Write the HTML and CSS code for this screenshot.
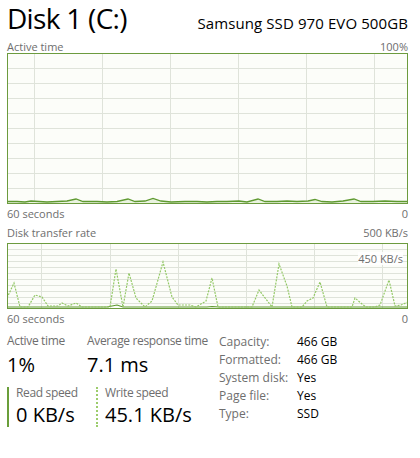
FILE: index.html
```html
<!DOCTYPE html>
<html>
<head>
<meta charset="utf-8">
<link rel="stylesheet" href="styles.css">
</head>
<body>
<div class="page">
  <header class="header">
    <div class="title">Disk 1 (C:)</div>
    <div class="model">Samsung SSD 970 EVO 500GB</div>
  </header>

  <div class="row-label top1"><span>Active time</span><span>100%</span></div>
  <div class="chart chart-active">
    <svg width="401" height="151" viewBox="0 0 401 151">
      <rect x="0" y="0" width="401" height="151" fill="#fcfdf9"/>
      <g stroke="#dfe3da" stroke-width="1">
        <line x1="0" y1="15.5" x2="401" y2="15.5"/>
        <line x1="0" y1="30.5" x2="401" y2="30.5"/>
        <line x1="0" y1="45.5" x2="401" y2="45.5"/>
        <line x1="0" y1="60.5" x2="401" y2="60.5"/>
        <line x1="0" y1="75.5" x2="401" y2="75.5"/>
        <line x1="0" y1="90.5" x2="401" y2="90.5"/>
        <line x1="0" y1="105.5" x2="401" y2="105.5"/>
        <line x1="0" y1="120.5" x2="401" y2="120.5"/>
        <line x1="0" y1="135.5" x2="401" y2="135.5"/>
        <line x1="27.5" y1="0" x2="27.5" y2="151"/>
        <line x1="95.5" y1="0" x2="95.5" y2="151"/>
        <line x1="163.5" y1="0" x2="163.5" y2="151"/>
        <line x1="231.5" y1="0" x2="231.5" y2="151"/>
        <line x1="299.5" y1="0" x2="299.5" y2="151"/>
        <line x1="367.5" y1="0" x2="367.5" y2="151"/>
      </g>
      <polygon fill="#eaf3e0" points="0,151 0,148.5 10,148.5 18,149 24,148 32,148.5 40,149 50,148.5 60,148 69,146 76,148.5 90,148.5 100,149 110,148.5 121,146 128,148.5 138,148 146,145.5 154,148 164,149 178,148.5 190,148.5 200,149 210,148.5 220,148.5 232,148 240,149 251,146 258,148.5 270,148.5 280,148 290,148.5 301,148 308,146.5 315,148.5 325,149 336,148 347,146 354,148.5 366,148.5 378,148 390,148.5 401,148.5 401,151"/>
      <polyline fill="none" stroke="#5f9a31" stroke-width="1.3" points="0,148.5 10,148.5 18,149 24,148 32,148.5 40,149 50,148.5 60,148 69,146 76,148.5 90,148.5 100,149 110,148.5 121,146 128,148.5 138,148 146,145.5 154,148 164,149 178,148.5 190,148.5 200,149 210,148.5 220,148.5 232,148 240,149 251,146 258,148.5 270,148.5 280,148 290,148.5 301,148 308,146.5 315,148.5 325,149 336,148 347,146 354,148.5 366,148.5 378,148 390,148.5 401,148.5"/>
      <rect x="0.5" y="0.5" width="400" height="150" fill="none" stroke="#6c9b3e" stroke-width="1"/>
    </svg>
  </div>
  <div class="row-label bottom1"><span>60 seconds</span><span>0</span></div>

  <div class="row-label top2"><span>Disk transfer rate</span><span>500 KB/s</span></div>
  <div class="chart chart-rate">
    <svg width="401" height="66" viewBox="0 0 401 66">
      <rect x="0" y="0" width="401" height="66" fill="#fcfdf9"/>
      <g stroke="#dfe3da" stroke-width="1">
        <line x1="0" y1="6.5" x2="401" y2="6.5"/>
        <line x1="0" y1="12.5" x2="401" y2="12.5"/>
        <line x1="0" y1="18.5" x2="401" y2="18.5"/>
        <line x1="0" y1="24.5" x2="401" y2="24.5"/>
        <line x1="0" y1="30.5" x2="401" y2="30.5"/>
        <line x1="0" y1="36.5" x2="401" y2="36.5"/>
        <line x1="0" y1="42.5" x2="401" y2="42.5"/>
        <line x1="0" y1="48.5" x2="401" y2="48.5"/>
        <line x1="0" y1="54.5" x2="401" y2="54.5"/>
        <line x1="0" y1="60.5" x2="401" y2="60.5"/>
        <line x1="34.5" y1="0" x2="34.5" y2="66"/>
        <line x1="103.5" y1="0" x2="103.5" y2="66"/>
        <line x1="171.5" y1="0" x2="171.5" y2="66"/>
        <line x1="239.5" y1="0" x2="239.5" y2="66"/>
        <line x1="307.5" y1="0" x2="307.5" y2="66"/>
        <line x1="375.5" y1="0" x2="375.5" y2="66"/>
      </g>
      <polyline fill="none" stroke="#5f9a31" stroke-width="1.2" points="0,64 100,64 105,63 110,62 116,64 200,64 205,63.5 212,64 401,64"/>
      <polyline fill="none" stroke="#93c866" stroke-width="1.2" stroke-dasharray="2 1.2" points="0,55 7,40 13,64 21,64 28,52 35,54 41,63 51,63 55,60 61,63 69,60 75,64 103,64 109,26 116,64 122,30 129,55 138,64 145,58 156,19 165,54 171,62 183,62 189,64 199,58 205,35 211,64 245,64 252,47 265,64 272,21 280,43 285,64 295,64 300,58 306,55 313,39 320,64 345,64 348,55 355,61 359,64 368,64 373,62 382,37 388,63 394,62 401,59"/>
      <rect x="0.5" y="0.5" width="400" height="65" fill="none" stroke="#6c9b3e" stroke-width="1"/>
    </svg>
    <span class="chart-tag">450 KB/s</span>
  </div>
  <div class="row-label bottom2"><span>60 seconds</span><span>0</span></div>

  <section class="stats">
    <div class="stats-left">
      <div class="pair">
        <div class="stat">
          <div class="stat-label">Active time</div>
          <div class="stat-value">1%</div>
        </div>
        <div class="stat stat-second">
          <div class="stat-label">Average response time</div>
          <div class="stat-value">7.1 ms</div>
        </div>
      </div>
      <div class="pair pair-speeds">
        <div class="stat speed speed-read">
          <div class="stat-label">Read speed</div>
          <div class="stat-value">0 KB/s</div>
        </div>
        <div class="stat speed speed-write">
          <div class="stat-label">Write speed</div>
          <div class="stat-value">45.1 KB/s</div>
        </div>
      </div>
    </div>
    <dl class="props">
      <dt>Capacity:</dt><dd>466 GB</dd>
      <dt>Formatted:</dt><dd>466 GB</dd>
      <dt>System disk:</dt><dd>Yes</dd>
      <dt>Page file:</dt><dd>Yes</dd>
      <dt>Type:</dt><dd>SSD</dd>
    </dl>
  </section>
</div>
</body>
</html>
```

FILE: styles.css
```css
* { box-sizing: border-box; }

html, body {
  margin: 0;
  padding: 0;
  background: #ffffff;
}

body {
  font-family: "Open Sans", "Noto Sans", sans-serif;
  color: #000;
}

.page {
  width: 420px;
  padding: 0 12px 0 7px;
}

.header {
  height: 40px;
  display: flex;
  justify-content: space-between;
  align-items: baseline;
}

.title {
  font-size: 28px;
  line-height: 36px;
  letter-spacing: -0.7px;
}

.model {
  font-size: 15px;
  line-height: 36px;
  letter-spacing: 0.1px;
}

.row-label {
  display: flex;
  justify-content: space-between;
  font-size: 11px;
  color: #6e6e6e;
  line-height: 13px;
}

.top1 { height: 13px; }
.bottom1 { height: 21px; padding-top: 3px; }
.top2 { height: 18px; padding-top: 1px; }
.bottom2 { height: 24px; padding-top: 3px; }

.chart {
  position: relative;
  line-height: 0;
}

.chart svg { display: block; }

.chart-active { height: 151px; }
.chart-rate { height: 66px; }

.chart-tag {
  position: absolute;
  top: 9px;
  right: 5px;
  font-size: 11px;
  line-height: 13px;
  color: #6e6e6e;
  background: rgba(255, 255, 255, 0.85);
}

.stats {
  display: flex;
}

.stats-left {
  width: 212px;
}

.pair {
  display: flex;
}

.stat {
  width: 80px;
}

.stat-second {
  width: auto;
}

.stat-label {
  font-size: 12px;
  line-height: 16px;
  letter-spacing: -0.35px;
  color: #6e6e6e;
}

.stat-value {
  font-size: 20px;
  line-height: 24px;
  margin-top: 4px;
  color: #000;
}

.pair-speeds {
  margin-top: 10px;
}

.speed {
  padding-left: 7px;
  height: 40px;
}

.speed .stat-label { line-height: 12px; }
.speed .stat-value { line-height: 24px; margin-top: 4px; }

.speed-read {
  width: 89px;
  border-left: 2px solid #6a9e3a;
}

.speed-write {
  width: auto;
  border-left: 2px dotted #9ccc6c;
}

.props {
  margin: 0;
  display: grid;
  grid-template-columns: 78px auto;
  grid-auto-rows: 18px;
  font-size: 12px;
  line-height: 18px;
}

.props dt {
  color: #6e6e6e;
}

.props dd {
  margin: 0;
  color: #000;
}
```
